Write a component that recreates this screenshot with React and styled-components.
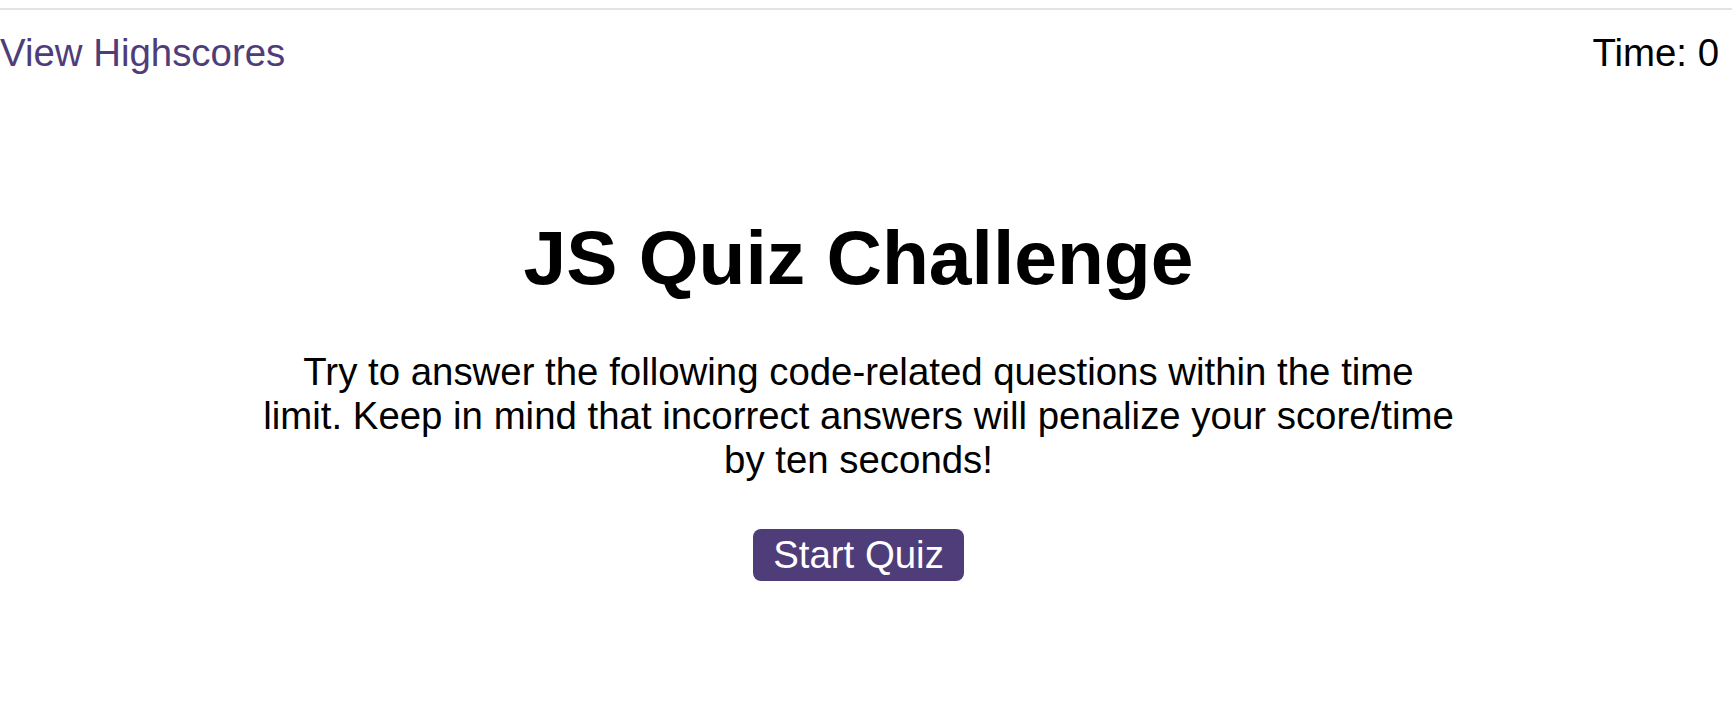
import React from 'react';
import styled, { createGlobalStyle } from 'styled-components';

const GlobalStyle = createGlobalStyle`
  html, body {
    margin: 0;
    background: #fff;
  }

  body {
    font-family: "Liberation Sans", Arial, sans-serif;
    font-size: 38.4px;
    color: #000;
  }
`;

const Page = styled.div`
  padding-top: 8px;
  margin-right: 15px;
`;

const Header = styled.header`
  display: flex;
  justify-content: space-between;
  align-items: flex-start;
  border-top: 2px solid #e3e3e3;
  margin-right: -15px;
  padding: 21px 13px 0 0;
`;

const HighscoreLink = styled.a`
  color: #4f3d79;
  text-decoration: none;
  cursor: pointer;
`;

const Timer = styled.div`
  color: #000;
`;

const Intro = styled.main`
  display: flex;
  flex-direction: column;
  align-items: center;
  text-align: center;
`;

const Title = styled.h1`
  font-size: 76.8px;
  font-weight: bold;
  margin: 138px 0 48px;
`;

const Blurb = styled.p`
  max-width: 1195px;
  margin: 0 0 47px;
`;

const StartButton = styled.button`
  font-family: inherit;
  font-size: 38.4px;
  color: #fff;
  background: #4f3d79;
  border: none;
  border-radius: 8px;
  padding: 4px 20px;
  cursor: pointer;
`;

export default function App() {
  return (
    <Page>
      <GlobalStyle />
      <Header>
        <HighscoreLink>View Highscores</HighscoreLink>
        <Timer>Time: 0</Timer>
      </Header>

      <Intro>
        <Title>JS Quiz Challenge</Title>
        <Blurb>
          Try to answer the following code-related questions within the time
          limit. Keep in mind that incorrect answers will penalize your
          score/time by ten seconds!
        </Blurb>
        <StartButton>Start Quiz</StartButton>
      </Intro>
    </Page>
  );
}
